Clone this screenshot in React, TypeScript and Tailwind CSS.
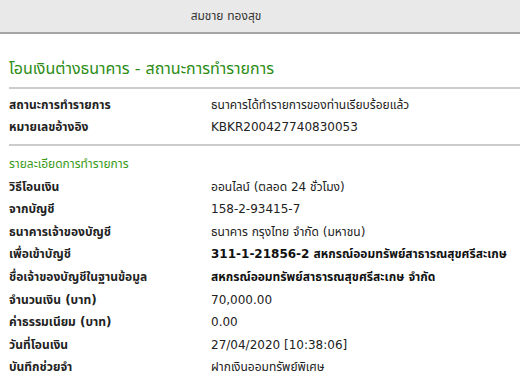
const summary = [
  { label: 'สถานะการทำรายการ', value: 'ธนาคารได้ทำรายการของท่านเรียบร้อยแล้ว' },
  { label: 'หมายเลขอ้างอิง', value: 'KBKR200427740830053' },
]

const details = [
  { label: 'วิธีโอนเงิน', value: 'ออนไลน์ (ตลอด 24 ชั่วโมง)' },
  { label: 'จากบัญชี', value: '158-2-93415-7' },
  { label: 'ธนาคารเจ้าของบัญชี', value: 'ธนาคาร กรุงไทย จำกัด (มหาชน)' },
  { label: 'เพื่อเข้าบัญชี', value: '311-1-21856-2 สหกรณ์ออมทรัพย์สาธารณสุขศรีสะเกษ', bold: true },
  { label: 'ชื่อเจ้าของบัญชีในฐานข้อมูล', value: 'สหกรณ์ออมทรัพย์สาธารณสุขศรีสะเกษ จำกัด', bold: true },
  { label: 'จำนวนเงิน (บาท)', value: '70,000.00' },
  { label: 'ค่าธรรมเนียม (บาท)', value: '0.00' },
  { label: 'วันที่โอนเงิน', value: '27/04/2020 [10:38:06]' },
  { label: 'บันทึกช่วยจำ', value: 'ฝากเงินออมทรัพย์พิเศษ' },
]

function Row({ label, value, bold }: { label: string; value: string; bold?: boolean }) {
  return (
    <div className="flex">
      <div className="w-[202px] shrink-0 font-bold text-[#222]">{label}</div>
      <div className={bold ? 'font-bold text-[#111]' : 'text-[#222]'}>{value}</div>
    </div>
  )
}

export default function App() {
  return (
    <div
      className="w-[520px] h-[383px] overflow-hidden bg-white text-[12px]"
      style={{ fontFamily: '"DejaVu Sans", "Noto Sans Thai", "Noto Sans", sans-serif' }}
    >
      <div className="h-[34px] bg-[#e9e9e9] border-b-2 border-[#a5a5a5] flex items-center justify-center pr-[68px] text-[#333]">
        สมชาย ทองสุข
      </div>

      <div className="pl-[9px]">
        <h1 className="pt-[24px] pb-[7px] text-[16px] text-[#2c8c16] leading-[22px]">
          โอนเงินต่างธนาคาร - สถานะการทำรายการ
        </h1>
        <div className="h-[2px] bg-[#cccccc]" />

        <div className="pt-[5px] leading-[22px]">
          {summary.map((r) => (
            <Row key={r.label} {...r} />
          ))}
        </div>
        <div className="mt-[6px] h-[2px] bg-[#cccccc]" />

        <div className="pt-[7px] leading-[22.6px]">
          <div className="text-[#3a9a1a]">รายละเอียดการทำรายการ</div>
          {details.map((r) => (
            <Row key={r.label} {...r} />
          ))}
        </div>
      </div>
    </div>
  )
}
